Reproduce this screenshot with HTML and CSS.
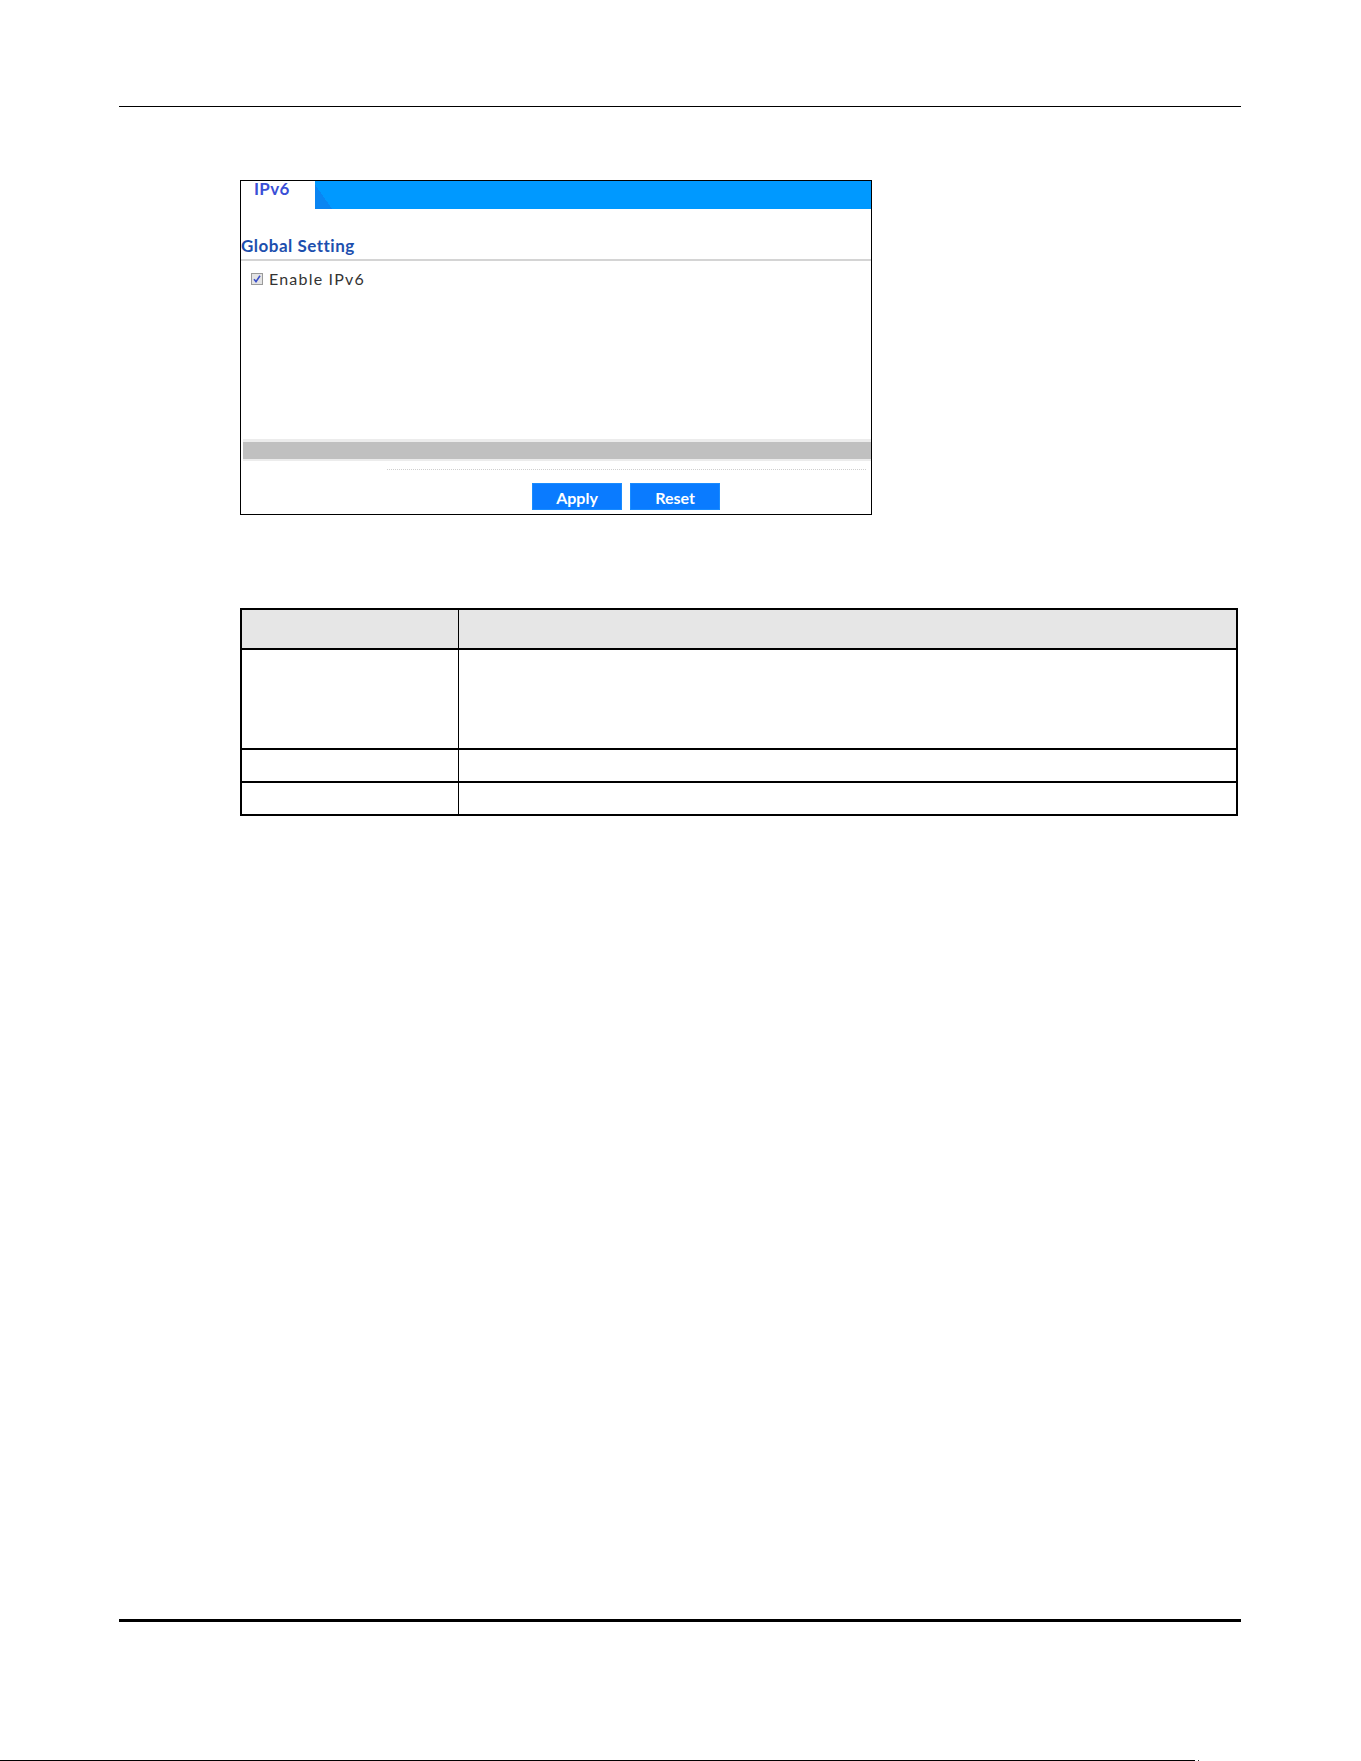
FILE: index.html
```html
<!DOCTYPE html>
<html>
<head>
<meta charset="utf-8">
<link rel="stylesheet" href="styles.css">
</head>
<body>
<div class="page">
  <div class="rule-top"></div>
  <section class="panel">
    <div class="tabbar">
      <div class="tab">IPv6</div>
      <div class="tab-fill"></div>
    </div>
    <h2 class="section-title">Global Setting</h2>
    <div class="section-body">
      <label class="check-row">
        <span class="checkbox"><svg width="12" height="12" viewBox="0 0 12 12"><rect x="0.5" y="0.5" width="11" height="11" fill="#e4e4e4" stroke="#9a9a9a"/><path d="M3 6.2 L5 8.6 L9 2.8" fill="none" stroke="#3b4fc8" stroke-width="1.6"/></svg></span>
        <span class="check-label">Enable IPv6</span>
      </label>
    </div>
    <div class="scrollbar"><div class="scroll-track"></div></div>
    <div class="dotline"></div>
    <div class="actions">
      <button class="btn">Apply</button>
      <button class="btn">Reset</button>
    </div>
  </section>
  <table class="desc">
    <tr class="head"><th class="c1"></th><th class="c2"></th></tr>
    <tr class="r1"><td class="c1"></td><td class="c2"></td></tr>
    <tr class="r2"><td class="c1"></td><td class="c2"></td></tr>
    <tr class="r3"><td class="c1"></td><td class="c2"></td></tr>
  </table>
  <div class="spacer"></div>
  <div class="rule-bottom"></div>
  <div class="rule-edge"><span class="edge-dot"></span></div>
</div>
</body>
</html>
```

FILE: styles.css
```css
html, body {
  margin: 0;
  padding: 0;
  background: #ffffff;
}
.page {
  width: 1361px;
  height: 1761px;
  display: flex;
  flex-direction: column;
  font-family: "Lato", "Liberation Sans", sans-serif;
}
.rule-top {
  margin-top: 106px;
  margin-left: 119px;
  width: 1122px;
  height: 1px;
  background: #000;
}
.panel {
  margin-top: 73px;
  margin-left: 240px;
  width: 630px;
  height: 333px;
  border: 1px solid #000;
  display: flex;
  flex-direction: column;
}
.tabbar {
  display: flex;
  height: 28px;
}
.tab {
  width: 74px;
  padding-left: 13px;
  box-sizing: border-box;
  font-weight: 700;
  font-size: 17px;
  line-height: 16px;
  color: #3a4fd6;
  letter-spacing: 0.3px;
}
.tab-fill {
  flex: 1;
  background: linear-gradient(55deg, #0a85f2 0 14px, #0099ff 14px);
}
.section-title {
  margin: 27px 0 0 0;
  font-size: 17px;
  line-height: 20px;
  font-weight: 700;
  color: #1d4fae;
  letter-spacing: 0.5px;
  padding-bottom: 3px;
  border-bottom: 2px solid #d4d4d4;
}
.section-body {
  height: 178px;
  padding: 10px 0 0 10px;
  box-sizing: border-box;
}
.check-row {
  display: flex;
  align-items: center;
  gap: 6px;
}
.checkbox {
  display: flex;
  width: 12px;
  height: 12px;
}
.check-label {
  font-size: 16px;
  line-height: 16px;
  color: #333;
  letter-spacing: 1.2px;
}
.scrollbar {
  margin-left: 2px;
  padding: 3px 0 2px;
  background: #ececec;
}
.scroll-track {
  height: 17px;
  background: #c0c0c0;
}
.dotline {
  margin: 8px 5px 0 146px;
  border-top: 1px dotted #cfcfcf;
}
.actions {
  display: flex;
  gap: 8px;
  margin-top: 13px;
  margin-left: 291px;
}
.btn {
  width: 90px;
  height: 27px;
  border: 1px solid #1a8cff;
  background: #0a7bff;
  color: #fff;
  font-family: "Lato", "Liberation Sans", sans-serif;
  font-weight: 700;
  font-size: 16px;
  padding: 2px 0 0;
}
.desc {
  margin-top: 93px;
  margin-left: 240px;
  width: 998px;
  border-collapse: collapse;
  border: 2px solid #000;
}
.desc th, .desc td {
  border-top: 2px solid #000;
  border-bottom: 2px solid #000;
  padding: 0;
}
.desc .c1 {
  width: 216px;
  border-right: 1px solid #000;
}
.desc .head {
  height: 40px;
  background: #e6e6e6;
}
.desc .r1 { height: 100px; }
.desc .r2 { height: 33px; }
.desc .r3 { height: 33px; }
.spacer {
  flex: 1;
}
.rule-bottom {
  margin-left: 119px;
  width: 1122px;
  height: 3px;
  background: #000;
  margin-bottom: 138px;
}
.rule-edge {
  display: flex;
  align-items: center;
  gap: 3px;
  height: 1px;
}
.rule-edge::before {
  content: "";
  width: 1195px;
  height: 1px;
  background: #000;
}
.edge-dot {
  width: 1px;
  height: 1px;
  background: #333;
}
```
